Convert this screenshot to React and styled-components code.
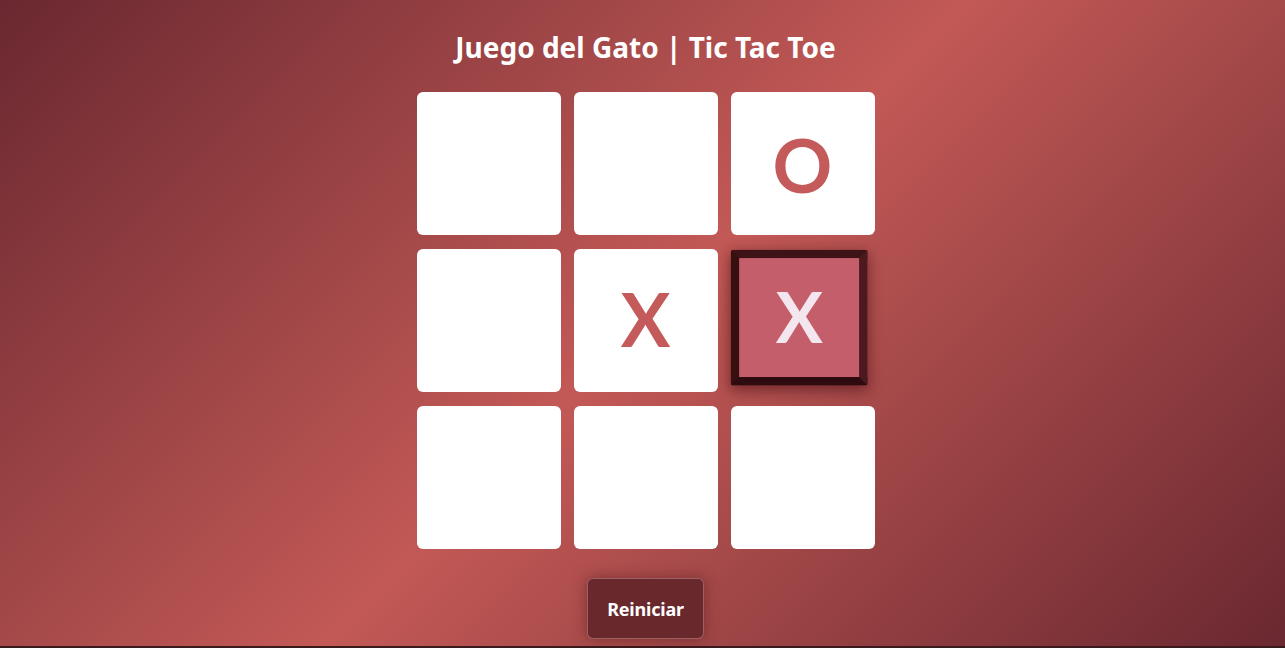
import React, { useState } from 'react'
import styled, { createGlobalStyle } from 'styled-components'

const GlobalStyle = createGlobalStyle`
  html, body {
    margin: 0;
    padding: 0;
  }
  body {
    font-family: "Noto Sans", "Liberation Sans", sans-serif;
    background: linear-gradient(135deg, #6a2830 0%, #c25956 50%, #6a2830 100%);
    min-height: 100vh;
    overflow: hidden;
  }
`

const Page = styled.div`
  display: flex;
  flex-direction: column;
  align-items: center;
  min-height: 100vh;
  box-sizing: border-box;
  padding: 28px 0 0 6px;
  border-bottom: 2px solid #3a1a1c;
`

const Title = styled.h1`
  margin: 0 0 26px;
  color: #fff;
  font-size: 28px;
  font-weight: 700;
  line-height: 38px;
  letter-spacing: 0;
`

const Board = styled.div`
  display: grid;
  grid-template-columns: repeat(3, 144px);
  grid-auto-rows: 143px;
  gap: 14px 13px;
`

const Cell = styled.button`
  display: flex;
  align-items: center;
  justify-content: center;
  border: none;
  border-radius: 6px;
  background: #fff;
  color: #c55a5b;
  font-family: Lato, "Noto Sans", sans-serif;
  font-size: 74px;
  font-weight: 700;
  padding: 0;
  cursor: pointer;

  &.active {
    background: #c45e6a;
    color: #f3e6ee;
    border-style: solid;
    border-width: 9px;
    border-color: #3e1317 #4c1a1e #2e0b0f #35100f;
    border-radius: 3px;
    transform: scale(0.95) translate(-4px, -3px);
    box-shadow: 0 4px 14px rgba(60, 10, 14, 0.55);
  }
`

const Mark = styled.span`
  display: block;
  line-height: 1;
  transform: translateY(${p => (p.$o ? '1px' : '-2px')});
`

const ResetButton = styled.button`
  margin-top: 29px;
  width: 117px;
  height: 61px;
  background: #68282c;
  color: #fff;
  border: 1px solid rgba(255, 200, 200, 0.35);
  border-radius: 6px;
  font-family: "Noto Sans", sans-serif;
  font-size: 18px;
  font-weight: 700;
  letter-spacing: -0.2px;
  box-shadow: 0 0 14px rgba(80, 20, 24, 0.5);
  cursor: pointer;
`

const initial = ['', '', 'O', '', 'X', 'X', '', '', '']

export default function App() {
  const [cells, setCells] = useState(initial)
  const [active, setActive] = useState(5)

  return (
    <>
      <GlobalStyle />
      <Page>
        <Title>Juego del Gato | Tic Tac Toe</Title>
        <Board>
          {cells.map((c, i) => (
            <Cell key={i} className={i === active ? 'active' : ''} onClick={() => setActive(i)}>
              {c && <Mark $o={c === 'O'}>{c}</Mark>}
            </Cell>
          ))}
        </Board>
        <ResetButton onClick={() => { setCells(Array(9).fill('')); setActive(-1) }}>
          Reiniciar
        </ResetButton>
      </Page>
    </>
  )
}
